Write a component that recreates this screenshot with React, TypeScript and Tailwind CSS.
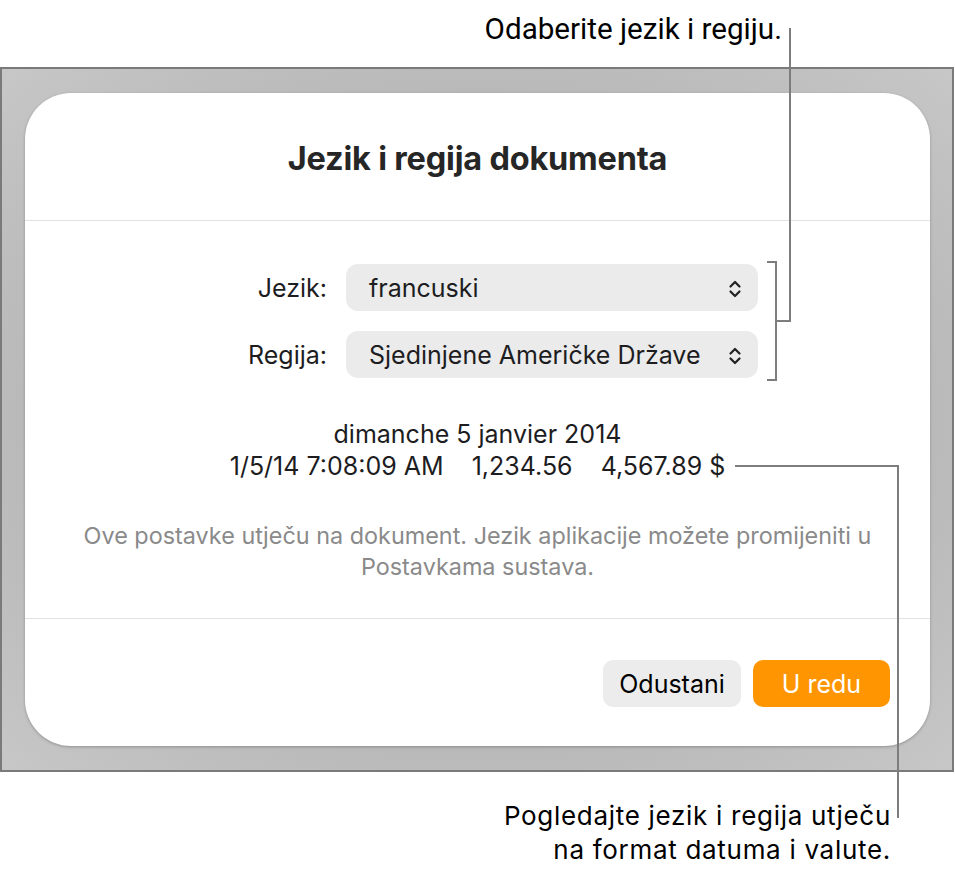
import { Fragment } from "react";

function UpDownChevron() {
  return (
    <svg width="16" height="22" viewBox="0 0 16 22" fill="none" stroke="#222" strokeWidth="2.2" strokeLinecap="round" strokeLinejoin="round">
      <path d="M3.5 8.5 L8 4 L12.5 8.5" />
      <path d="M3.5 13.5 L8 18 L12.5 13.5" />
    </svg>
  );
}

const rows = [
  { label: "Jezik:", value: "francuski" },
  { label: "Regija:", value: "Sjedinjene Američke Države" },
];

export default function App() {
  return (
    <div className="relative w-[955px] h-[875px] bg-white font-['Inter',sans-serif] text-[#1d1d1f] overflow-hidden">
      {/* top callout */}
      <div className="h-[67px] flex items-start justify-end pr-[173px] pt-[10px]">
        <span className="font-['Roboto',sans-serif] text-[29.6px] leading-[38px] text-black">Odaberite jezik i regiju.</span>
      </div>

      {/* gray frame */}
      <div className="w-[954px] h-[705px] border-2 border-[#7a7a7a] bg-[radial-gradient(ellipse_at_center,#b2b2b2_50%,#c7c7c7_100%)] pl-[23px] pt-[24px]">
        <div className="w-[905px] h-[653px] rounded-[46px] bg-white shadow-[0_1px_3px_rgba(0,0,0,0.25)] flex flex-col">
          <div className="h-[128px] flex items-center justify-center border-b border-[#e2e2e2] pt-[6px]">
            <h1 className="text-[32.5px] font-bold tracking-[-0.2px] text-[#262626]">Jezik i regija dokumenta</h1>
          </div>

          <div className="grid grid-cols-[302px_412px] gap-x-[19px] gap-y-[20px] mt-[43px] items-center">
            {rows.map((r) => (
              <Fragment key={r.label}>
                <span className="text-right text-[25px] pt-[2px]">{r.label}</span>
                <div className="h-[47px] rounded-[12px] bg-[#ebebeb] flex items-center justify-between pl-[23px] pr-[15px] pt-[2px] text-[25px]">
                  <span>{r.value}</span>
                  <UpDownChevron />
                </div>
              </Fragment>
            ))}
          </div>

          <div className="mt-[40px] flex flex-col items-center text-[25px] leading-[32px]">
            <span>dimanche 5 janvier 2014</span>
            <span className="whitespace-pre">1/5/14 7:08:09 AM    1,234.56    4,567.89 $</span>
          </div>

          <p className="mt-[38px] text-center text-[23.4px] leading-[31px] text-[#8a8a8a] px-[40px]">
            Ove postavke utječu na dokument. Jezik aplikacije možete promijeniti u Postavkama sustava.
          </p>

          <div className="mt-[36px] border-t border-[#e2e2e2]" />

          <div className="flex justify-end gap-[12px] pr-[40px] mt-[41px]">
            <button className="w-[138px] h-[47px] rounded-[10px] bg-[#ececec] text-[25px] text-black pt-[2px]">Odustani</button>
            <button className="w-[137px] h-[47px] rounded-[10px] bg-[#ff9500] text-[25px] text-white pt-[2px]">U redu</button>
          </div>
        </div>
      </div>

      {/* bottom callout */}
      <div className="flex flex-col items-end pr-[64px] mt-[27px] text-[26px] tracking-[0.7px] leading-[34px] text-black">
        <span>Pogledajte jezik i regija utječu</span>
        <span>na format datuma i valute.</span>
      </div>

      {/* callout lines */}
      <svg className="absolute inset-0 pointer-events-none" width="955" height="875" fill="none" stroke="#7d7d7d" strokeWidth="2">
        <path d="M790 28 V321 H776" />
        <path d="M767 262 H776 V380 H767" />
        <path d="M735 466 H898 V818" />
      </svg>
    </div>
  );
}
